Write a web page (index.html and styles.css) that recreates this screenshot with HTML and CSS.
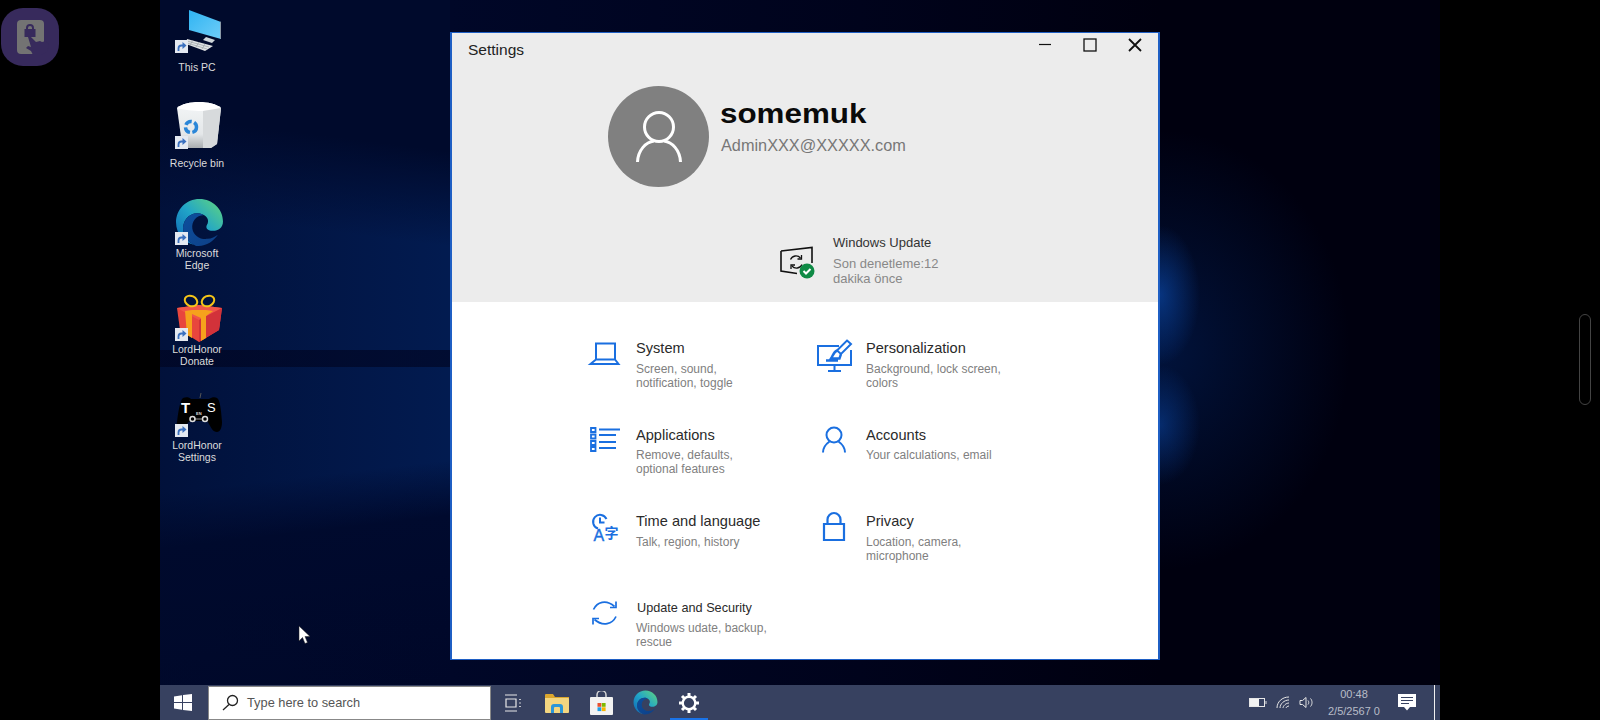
FILE: index.html
```html
<!DOCTYPE html>
<html lang="en">
<head>
    <meta charset="UTF-8">
    <title>Settings</title>
    <link rel="stylesheet" href="styles.css">
</head>
<body>
    <svg class="defs" width="0" height="0">
        <defs>
            <linearGradient id="edge-top" x1="0" y1="1" x2="1" y2="0">
                <stop offset="0" stop-color="#0c63b4"/>
                <stop offset="0.5" stop-color="#21a5c8"/>
                <stop offset="1" stop-color="#63d77c"/>
            </linearGradient>
            <linearGradient id="edge-low" x1="0" y1="0" x2="1" y2="1">
                <stop offset="0" stop-color="#0c4f9e"/>
                <stop offset="1" stop-color="#0e3f86"/>
            </linearGradient>
            <linearGradient id="pc-screen" x1="0" y1="0" x2="1" y2="1">
                <stop offset="0" stop-color="#2fb4f2"/>
                <stop offset="1" stop-color="#6fcdf8"/>
            </linearGradient>
            <linearGradient id="bin-body" x1="0" y1="0" x2="0" y2="1">
                <stop offset="0" stop-color="#f4f6f7"/>
                <stop offset="0.7" stop-color="#e4e7e9"/>
                <stop offset="1" stop-color="#a9adb0"/>
            </linearGradient>
            <symbol id="edge-logo" viewBox="0 0 48 48">
                <path fill="url(#edge-top)" d="M1 24C1 11 11 1 24 1c13 0 23 10 23 22 0 7-6 10-12 9-5-1-5-4-3-7 2-5-3-10-10-10C13 15 7 23 8 32c1 6 5 11 11 14C9 44 1 35 1 24z"/>
                <path fill="url(#edge-low)" d="M8 32c-1-9 5-17 14-17 3 0 5 1 6 2-7 0-12 6-11 13 1 7 8 11 15 10 4 0 7-2 10-4-4 6-11 11-19 11-2 0-3 0-4-1C13 43 9 38 8 32z"/>
            </symbol>
            <symbol id="shortcut" viewBox="0 0 13 13">
                <rect width="13" height="13" fill="#e4e9f1"/>
                <path fill="none" stroke="#3a70bf" stroke-width="1.800" d="M3.500 11V8.500c0-2 1-3 3-3h2"/>
                <path fill="#3a70bf" d="M7.500 2 11.500 5.500 7.500 9z"/>
            </symbol>
        </defs>
    </svg>

    <div class="app-badge">
        <div class="app-badge-inner">
            <svg width="34" height="36" viewBox="0 0 34 36">
                <path fill="#372a5c" d="M9 9V8a4 4 0 0 1 8 0v1h1.500v8h-11V9zm2 0h4V8a2 2 0 0 0-4 0z"/>
                <path fill="#372a5c" d="M11 17l2-1 6 6 4-1 2 1 4-1 3 4-2 7-6 3H16l-2-4-5-3 2-2 3 1z"/>
            </svg>
        </div>
    </div>
    <div class="edge-pill"></div>

    <div class="desktop">
        <div class="wallpaper">
            <div class="desktop-icons">
                <div class="shortcut-item">
                    <div class="shortcut-pic">
                        <svg width="48" height="48" viewBox="0 0 48 48">
                            <path fill="url(#pc-screen)" d="M16 5l32 12v17L16 25z"/>
                            <path fill="#8a9aa8" d="M47 16.600l1 .4v17l-1-.4z"/>
                            <path fill="#cfd6da" d="M33 32l9 3-3 3-9-3z"/>
                            <path fill="#dfe2e4" d="M14 34l26 7-8 5-19-7z"/>
                            <path fill="none" stroke="#9aa0a5" stroke-width="0.700" d="M14 36l22 6M14 38l20 6M20 35l-3 5M26 37l-3 5M32 39l-3 5"/>
                        </svg>
                        <svg class="shortcut-mark"><use href="#shortcut"/></svg>
                    </div>
                    <div class="shortcut-label">This PC</div>
                </div>
                <div class="shortcut-item">
                    <div class="shortcut-pic">
                        <svg width="48" height="48" viewBox="0 0 48 48">
                            <path fill="url(#bin-body)" d="M4 7C8 3 18 1 26 1s18 2 22 6l-4 36-6 4H14l-5-4z"/>
                            <path fill="#fff" d="M4 7C8 3 18 1 26 1s18 2 22 6c-6 2-14 3-20 3S10 9 4 7z"/>
                            <path fill="#d7dadc" d="M30 10l18-3-4 36-6 4H30z"/>
                            <circle cx="18" cy="26" r="5.500" fill="none" stroke="#2a86d8" stroke-width="3.500" stroke-dasharray="7 2.500"/>
                        </svg>
                        <svg class="shortcut-mark"><use href="#shortcut"/></svg>
                    </div>
                    <div class="shortcut-label">Recycle bin</div>
                </div>
                <div class="shortcut-item">
                    <div class="shortcut-pic">
                        <svg class="edge-big" width="49" height="49"><use href="#edge-logo"/></svg>
                        <svg class="shortcut-mark"><use href="#shortcut"/></svg>
                    </div>
                    <div class="shortcut-label">Microsoft Edge</div>
                </div>
                <div class="shortcut-item">
                    <div class="shortcut-pic">
                        <svg width="50" height="50" viewBox="0 0 50 50">
                            <path fill="#e8463d" d="M4 15l22-3 23 3-3 22-20 12-19-12z"/>
                            <path fill="#f0564a" d="M4 15l22-3 23 3-23 12z"/>
                            <path fill="#d2323a" d="M26 27l23-12-3 22-20 12z"/>
                            <path fill="#f6a21c" d="M12 18l7-1 14 0 7 1-7 5v22l-5 3V25l-9-4v24l-5-3z"/>
                            <g fill="none" stroke="#f5c518" stroke-width="2">
                                <ellipse cx="18" cy="8" rx="6.500" ry="5" transform="rotate(25 18 8)"/>
                                <ellipse cx="35" cy="8" rx="6.500" ry="5" transform="rotate(-25 35 8)"/>
                            </g>
                        </svg>
                        <svg class="shortcut-mark"><use href="#shortcut"/></svg>
                    </div>
                    <div class="shortcut-label">LordHonor Donate</div>
                </div>
                <div class="shortcut-item">
                    <div class="shortcut-pic">
                        <svg width="50" height="48" viewBox="0 0 50 48">
                            <path d="M27 9l1-5" stroke="#555" fill="none"/>
                            <path fill="#000" d="M10 9c3-1 6-1 8 1h18c3-2 6-2 8-1 3 2 4 11 5 24 0 6-2 10-5 10-4 0-6-4-9-10-1-1-2-1-3-1H18c-1 0-3 1-4 3l-5 8H5c-3 0-2-5-1-10 1-9 3-22 6-24z"/>
                            <text class="pad-key" x="8" y="23.500">T</text>
                            <text class="pad-key pad-key-s" x="34" y="23">S</text>
                            <text class="pad-tiny" x="23" y="25.500">EN</text>
                            <g fill="none" stroke="#ddd" stroke-width="1.500">
                                <circle cx="19.500" cy="30" r="2.500"/>
                                <circle cx="32" cy="30" r="2.500"/>
                                <path d="M22 30h7.500" stroke-width="0.700"/>
                            </g>
                        </svg>
                        <svg class="shortcut-mark"><use href="#shortcut"/></svg>
                    </div>
                    <div class="shortcut-label">LordHonor Settings</div>
                </div>
            </div>

            <div class="settings-window">
                <div class="win-head">
                    <div class="titlebar">
                        <span class="win-title">Settings</span>
                        <div class="win-controls">
                            <svg width="14" height="14" viewBox="0 0 14 14"><path d="M1 6.500h12" stroke="#111" stroke-width="1.200"/></svg>
                            <svg width="14" height="14" viewBox="0 0 14 14"><rect x="1" y="1" width="12" height="12" fill="none" stroke="#111" stroke-width="1.300"/></svg>
                            <svg width="14" height="14" viewBox="0 0 14 14"><path d="M1 1l12 12M13 1L1 13" stroke="#111" stroke-width="1.800"/></svg>
                        </div>
                    </div>
                    <div class="profile">
                        <div class="avatar">
                            <svg width="46" height="52" viewBox="0 0 46 52">
                                <ellipse cx="23" cy="16" rx="14.500" ry="14.500" fill="none" stroke="#fff" stroke-width="3"/>
                                <path d="M1.500 51C2 39 10 31 18 30M44.500 51C44 39 36 31 28 30" fill="none" stroke="#fff" stroke-width="3"/>
                            </svg>
                        </div>
                        <div class="profile-text">
                            <div class="profile-name">somemuk</div>
                            <div class="profile-mail">AdminXXX@XXXXX.com</div>
                        </div>
                    </div>
                    <div class="update-box">
                        <svg class="update-pic" width="36" height="36" viewBox="0 0 36 36">
                            <path d="M3 6l31-3.500V18M3 6v20l16 2.500" fill="none" stroke="#111" stroke-width="1.600"/>
                            <path d="M12.500 14.500a6 6 0 0 1 10-1.500M24 19.500a6 6 0 0 1-10 1.500" fill="none" stroke="#111" stroke-width="1.300"/>
                            <path d="M23.500 10v4h-4M13 24v-4h4" fill="none" stroke="#111" stroke-width="1.300"/>
                            <circle cx="29" cy="26" r="7.500" fill="#0f8a45"/>
                            <path d="M25.500 26l2.500 2.500 4.500-4.500" fill="none" stroke="#fff" stroke-width="2"/>
                        </svg>
                        <div>
                            <div class="update-title">Windows Update</div>
                            <div class="update-sub">Son denetleme:12 dakika önce</div>
                        </div>
                    </div>
                </div>

                <div class="win-body">
                    <div class="cat">
                        <svg class="cat-pic" viewBox="0 0 36 36">
                            <path d="M10 4.500h19v16H10zM10 20.500L4.500 25h28L29 20.500"/>
                        </svg>
                        <div class="cat-text">
                            <div class="cat-title">System</div>
                            <div class="cat-sub">Screen, sound, notification, toggle</div>
                        </div>
                    </div>
                    <div class="cat">
                        <svg class="cat-pic" viewBox="0 0 36 36">
                            <path d="M23 7H2v19h33V11M18.500 26v6M12 32h13"/>
                            <path d="M31 1.500l4 3.500-10 10-4-3.500z"/>
                            <path d="M21 11.500c-3 1-4 5-6 8h8.500l1.500-4.500M10 21.500h12" stroke-width="2.400"/>
                        </svg>
                        <div class="cat-text">
                            <div class="cat-title">Personalization</div>
                            <div class="cat-sub">Background, lock screen, colors</div>
                        </div>
                    </div>
                    <div class="cat">
                        <svg class="cat-pic" viewBox="0 0 36 36">
                            <path d="M13 3.500h21M13 9h17M13 16h17M13 22h17"/>
                            <path d="M5 2h4.500v4H5zM5 8.500h4.500v4H5zM5 15h4.500v4H5zM5 21h4.500v4H5z" stroke-width="1.800"/>
                        </svg>
                        <div class="cat-text">
                            <div class="cat-title">Applications</div>
                            <div class="cat-sub">Remove, defaults, optional features</div>
                        </div>
                    </div>
                    <div class="cat">
                        <svg class="cat-pic" viewBox="0 0 36 36">
                            <circle cx="18" cy="9" r="7.500"/>
                            <path d="M7 26.500C7 22 10 18 13.500 15.500M29 26.500C29 22 26 18 22.500 15.500"/>
                        </svg>
                        <div class="cat-text">
                            <div class="cat-title">Accounts</div>
                            <div class="cat-sub">Your calculations, email</div>
                        </div>
                    </div>
                    <div class="cat">
                        <svg class="cat-pic" viewBox="0 0 36 36">
                            <path d="M12 16.500A7 7 0 1 1 20.500 7M14 5.500v5h4.500"/>
                            <text class="lang-a" x="7.500" y="29">A</text>
                            <text class="lang-z" x="18.500" y="25.500">字</text>
                        </svg>
                        <div class="cat-text">
                            <div class="cat-title">Time and language</div>
                            <div class="cat-sub">Talk, region, history</div>
                        </div>
                    </div>
                    <div class="cat">
                        <svg class="cat-pic" viewBox="0 0 36 36">
                            <path d="M8 12h20v16H8zM11.500 12V7.500a6.500 6.500 0 0 1 13 0V12" stroke-width="2.200"/>
                        </svg>
                        <div class="cat-text">
                            <div class="cat-title">Privacy</div>
                            <div class="cat-sub">Location, camera, microphone</div>
                        </div>
                    </div>
                    <div class="cat">
                        <svg class="cat-pic cat-pic-thin" viewBox="0 0 36 36">
                            <path d="M7.500 10.500C11 3 20 0 28.500 7.500M30 17.500C26.500 25 17 28 8.500 20.500"/>
                            <path d="M30 2.500v6h-6M7 25.500V19.500h6"/>
                        </svg>
                        <div class="cat-text">
                            <div class="cat-title cat-title-small">Update and Security</div>
                            <div class="cat-sub">Windows udate, backup, rescue</div>
                        </div>
                    </div>
                </div>
            </div>

            <svg class="mouse-cursor" width="13" height="19" viewBox="0 0 13 19">
                <path fill="#fff" stroke="#222" stroke-width="0.500" d="M1 1v15l3.500-3.500 2.500 6 2.500-1-2.500-6H12z"/>
            </svg>
        </div>

        <div class="taskbar">
            <div class="start-btn">
                <svg width="18" height="17" viewBox="0 0 18 17">
                    <path fill="#fff" d="M0 2.500l8-1.200v6.700H0zM9 1.100L18 0v8H9zM0 9h8v6.700l-8-1.200zM9 9h9v8l-9-1.100z"/>
                </svg>
            </div>
            <div class="search-box">
                <svg width="17" height="17" viewBox="0 0 17 17">
                    <circle cx="10.500" cy="6.500" r="5" fill="none" stroke="#222" stroke-width="1.300"/>
                    <path d="M7 10.500L1 16" stroke="#222" stroke-width="1.300"/>
                </svg>
                <span>Type here to search</span>
            </div>
            <div class="task-app">
                <svg width="16" height="18" viewBox="0 0 16 18" fill="none" stroke="#e8e8e8" stroke-width="1.200">
                    <path d="M0 1h12M0 17h12M1 5h10v8H1z"/>
                    <path d="M15 5v1M15 8.500v1M15 12v1" stroke-width="1.600"/>
                </svg>
            </div>
            <div class="task-app">
                <svg width="24" height="20" viewBox="0 0 24 20">
                    <path fill="#dca72e" d="M0 2a1 1 0 0 1 1-1h7l2 3h14v3H0z"/>
                    <path fill="#f3d680" d="M0 5h23a1 1 0 0 1 1 1v13a1 1 0 0 1-1 1H1a1 1 0 0 1-1-1z"/>
                    <path fill="#2a96d8" d="M6 20v-6a3 3 0 0 1 3-3h6a3 3 0 0 1 3 3v6h-3v-5a1 1 0 0 0-1-1h-4a1 1 0 0 0-1 1v5z"/>
                </svg>
            </div>
            <div class="task-app">
                <svg width="23" height="24" viewBox="0 0 23 24">
                    <path d="M7 6V4a4 4 0 0 1 9 0v2" fill="none" stroke="#d8d8d8" stroke-width="1.500"/>
                    <rect y="6" width="23" height="18" rx="1" fill="#f2f2f2"/>
                    <rect x="7.500" y="12" width="3.800" height="3.800" fill="#e8502f"/>
                    <rect x="11.800" y="12" width="3.800" height="3.800" fill="#7fba00"/>
                    <rect x="7.500" y="16.300" width="3.800" height="3.800" fill="#1e9ee6"/>
                    <rect x="11.800" y="16.300" width="3.800" height="3.800" fill="#f7b500"/>
                </svg>
            </div>
            <div class="task-app">
                <svg width="25" height="25"><use href="#edge-logo"/></svg>
            </div>
            <div class="task-app task-app-on">
                <svg width="20" height="20" viewBox="0 0 20 20">
                    <circle cx="10" cy="10" r="6.300" fill="none" stroke="#fff" stroke-width="2.400"/>
                    <path d="M10 0v4M10 16v4M0 10h4M16 10h4M3 3l3 3M14 14l3 3M17 3l-3 3M6 14l-3 3" stroke="#fff" stroke-width="3"/>
                </svg>
            </div>
            <div class="tray">
                <svg class="tray-battery" width="18" height="11" viewBox="0 0 18 11">
                    <rect x="0.500" y="1.500" width="15" height="8" fill="none" stroke="#e6e6e6"/>
                    <rect x="1" y="2" width="9" height="7" fill="#f2f2f2"/>
                    <path d="M17 4v3" stroke="#ddd"/>
                </svg>
                <svg class="tray-wifi" width="14" height="13" viewBox="0 0 14 13" fill="none" stroke="#e6e6e6">
                    <path d="M1 12C1 6 6 1 13 1M4 12c0-4 4-8 9-8M7 12c0-2 3-5 6-5M10 12c0-1 2-2 3-2"/>
                </svg>
                <svg class="tray-vol" width="14" height="13" viewBox="0 0 14 13" fill="none" stroke="#e6e6e6">
                    <path d="M1 4.500h2.500L7 1.500v10L3.500 8.500H1z"/>
                    <path d="M9 4.500c1 1 1 3 0 4M11.500 2.500c2 2 2 6 0 8"/>
                </svg>
                <div class="tray-clock">
                    <div>00:48</div>
                    <div>2/5/2567 0</div>
                </div>
                <svg class="tray-note" width="18" height="17" viewBox="0 0 18 17">
                    <path fill="#fff" d="M0 0h18v13h-6l-3 3.500L6 13H0z"/>
                    <path d="M3 3.500h12M3 6.500h12M3 9.500h8" stroke="#374160" stroke-width="1.200"/>
                </svg>
                <div class="tray-line"></div>
            </div>
        </div>
    </div>
</body>
</html>
```

FILE: styles.css
```css
* {
    box-sizing: border-box;
}
html, body {
    margin: 0;
    height: 100%;
}
body {
    position: relative;
    display: flex;
    justify-content: center;
    background: #000;
    font-family: "Liberation Sans", Arial, sans-serif;
    overflow: hidden;
}
.defs {
    position: absolute;
}

/* things lying over the black side bars */
.app-badge {
    position: absolute;
    left: 1px;
    top: 8px;
    width: 58px;
    height: 58px;
    border-radius: 22px;
    background: #372a5c;
    display: flex;
    align-items: center;
    justify-content: center;
}
.app-badge-inner {
    width: 27px;
    height: 34px;
    border-radius: 4px;
    background: #737373;
    display: flex;
}
.app-badge-inner svg {
    flex-shrink: 0;
}
.edge-pill {
    position: absolute;
    left: 1579px;
    top: 314px;
    width: 12px;
    height: 91px;
    border: 1px solid #444;
    border-radius: 6px;
}

.desktop {
    width: 1280px;
    height: 720px;
    display: flex;
    flex-direction: column;
}
.wallpaper {
    position: relative;
    flex: 1;
    background:
        linear-gradient(rgba(0, 3, 30, 0.6), rgba(0, 3, 30, 0.6)) 0 350px / 290px 17px no-repeat,
        linear-gradient(187.2deg, #000a2c 150px, rgba(0, 10, 44, 0) 245px) 0 0 / 290px 100% no-repeat,
        linear-gradient(90deg, rgba(0, 10, 44, 0.6), rgba(0, 10, 44, 0) 100%) 0 0 / 290px 100% no-repeat,
        linear-gradient(173.5deg, #021b50 0, #021b50 490px, #000a2e 545px, #000728 100%) 0 0 / 290px 100% no-repeat,
        radial-gradient(ellipse 40px 70px at 1000px 295px, rgba(14, 90, 205, 0.5), transparent 100%),
        radial-gradient(ellipse 40px 60px at 1000px 425px, rgba(14, 90, 205, 0.4), transparent 100%),
        radial-gradient(ellipse 190px 220px at 1000px 350px, rgba(2, 32, 90, 0.6), transparent 100%),
        linear-gradient(90deg, #000a2c 0, #000728 290px, #00031c 700px, #00000f 1000px);
}

.desktop-icons {
    display: flex;
    flex-direction: column;
    gap: 22px;
    width: 74px;
    padding-top: 5px;
}
.shortcut-item {
    display: flex;
    flex-direction: column;
    align-items: center;
    gap: 2px;
}
.shortcut-pic {
    position: relative;
    width: 48px;
    height: 48px;
}
.edge-big {
    display: block;
    margin-left: 2px;
    margin-top: 1px;
}
.shortcut-mark {
    position: absolute;
    left: 2px;
    top: 35px;
    width: 13px;
    height: 13px;
}
.shortcut-label {
    width: 66px;
    height: 24px;
    display: flex;
    align-items: center;
    justify-content: center;
    text-align: center;
    font-size: 10.5px;
    line-height: 12px;
    color: #dcdcdc;
}
.pad-key {
    font: bold 15px "Liberation Sans", sans-serif;
    fill: #fff;
}
.pad-key-s {
    font-weight: normal;
    font-size: 13px;
}
.pad-tiny {
    font: bold 4px "Liberation Sans", sans-serif;
    fill: #ddd;
}

.settings-window {
    position: absolute;
    left: 290px;
    top: 32px;
    width: 710px;
    height: 628px;
    border: 2px solid #1f5fc4;
    border-top-width: 1px;
    border-bottom-width: 1px;
    background: #fff;
    display: flex;
    flex-direction: column;
}
.win-head {
    height: 269px;
    background: #ececec;
}
.titlebar {
    height: 34px;
    display: flex;
    justify-content: space-between;
    padding: 0 16px 0 16px;
}
.win-title {
    font-size: 15.500px;
    line-height: 34px;
    color: #222;
}
.win-controls {
    display: flex;
    gap: 31px;
    padding-top: 5px;
}
.profile {
    display: flex;
    gap: 11px;
    margin-top: 19px;
    padding-left: 156px;
}
.avatar {
    width: 101px;
    height: 101px;
    border-radius: 50%;
    background: #808080;
    display: flex;
    align-items: center;
    justify-content: center;
}
.profile-text {
    padding-top: 12px;
}
.profile-name {
    font-size: 28px;
    font-weight: bold;
    line-height: 32px;
    color: #0a0a0a;
    transform: scaleX(1.12);
    transform-origin: left;
}
.profile-mail {
    margin-top: 6px;
    margin-left: 1px;
    font-size: 16.300px;
    line-height: 18px;
    color: #777;
}
.update-box {
    display: flex;
    gap: 19px;
    margin-top: 47.500px;
    padding-left: 326px;
}
.update-pic {
    margin-top: 10.500px;
    overflow: visible;
}
.update-title {
    font-size: 13px;
    line-height: 15px;
    color: #333;
}
.update-sub {
    width: 115px;
    margin-top: 6px;
    font-size: 13px;
    line-height: 15px;
    color: #888;
}

.win-body {
    flex: 1;
    display: grid;
    grid-template-columns: 230px 230px;
    grid-auto-rows: 86.500px;
    padding: 37px 0 0 134px;
    overflow: hidden;
}
.cat {
    display: flex;
    gap: 14px;
}
.cat-pic {
    width: 36px;
    height: 36px;
    flex-shrink: 0;
    fill: none;
    stroke: #1a6fe0;
    stroke-width: 2;
    overflow: visible;
}
.cat-pic-thin {
    stroke-width: 1.700;
}
.cat-text {
    width: 136px;
}
.cat-title {
    font-size: 14.600px;
    line-height: 18px;
    white-space: nowrap;
    color: #2a2a2a;
}
.cat-title-small {
    font-size: 12.700px;
    margin-left: 1px;
}
.cat-sub {
    margin-top: 4.500px;
    font-size: 12px;
    line-height: 14px;
    color: #808080;
}
.lang-a {
    font: 16px "Liberation Sans", sans-serif;
    fill: #1a6fe0;
    stroke: #1a6fe0;
    stroke-width: 0.400;
}
.lang-z {
    font: bold 14px "Noto Sans CJK SC", sans-serif;
    fill: #1a6fe0;
    stroke: none;
}
.mouse-cursor {
    position: absolute;
    left: 138px;
    top: 625px;
}

.taskbar {
    height: 35px;
    display: flex;
    align-items: center;
    background: #374160;
}
.start-btn {
    width: 48px;
    padding-left: 14px;
    display: flex;
}
.search-box {
    width: 283px;
    height: 34px;
    display: flex;
    align-items: center;
    gap: 8px;
    padding-left: 13px;
    background: #fff;
    border: 1px solid #888;
    font-size: 12.800px;
    color: #555;
}
.task-app {
    position: relative;
    width: 44px;
    height: 35px;
    display: flex;
    align-items: center;
    justify-content: center;
}
.task-app-on::after {
    content: "";
    position: absolute;
    left: 3px;
    right: 3px;
    bottom: 0;
    height: 2px;
    background: #1a73e8;
}
.tray {
    margin-left: auto;
    display: flex;
    align-items: center;
    height: 100%;
    padding-right: 5px;
}
.tray-wifi {
    margin-left: 9px;
}
.tray-vol {
    margin-left: 9px;
}
.tray-clock {
    width: 68px;
    margin-left: 7px;
    text-align: center;
    font-size: 11px;
    line-height: 17px;
    color: #b9bdc8;
}
.tray-note {
    margin-left: 10px;
}
.tray-line {
    width: 1px;
    height: 100%;
    margin-left: 18px;
    background: #f0f0f0;
}
```
